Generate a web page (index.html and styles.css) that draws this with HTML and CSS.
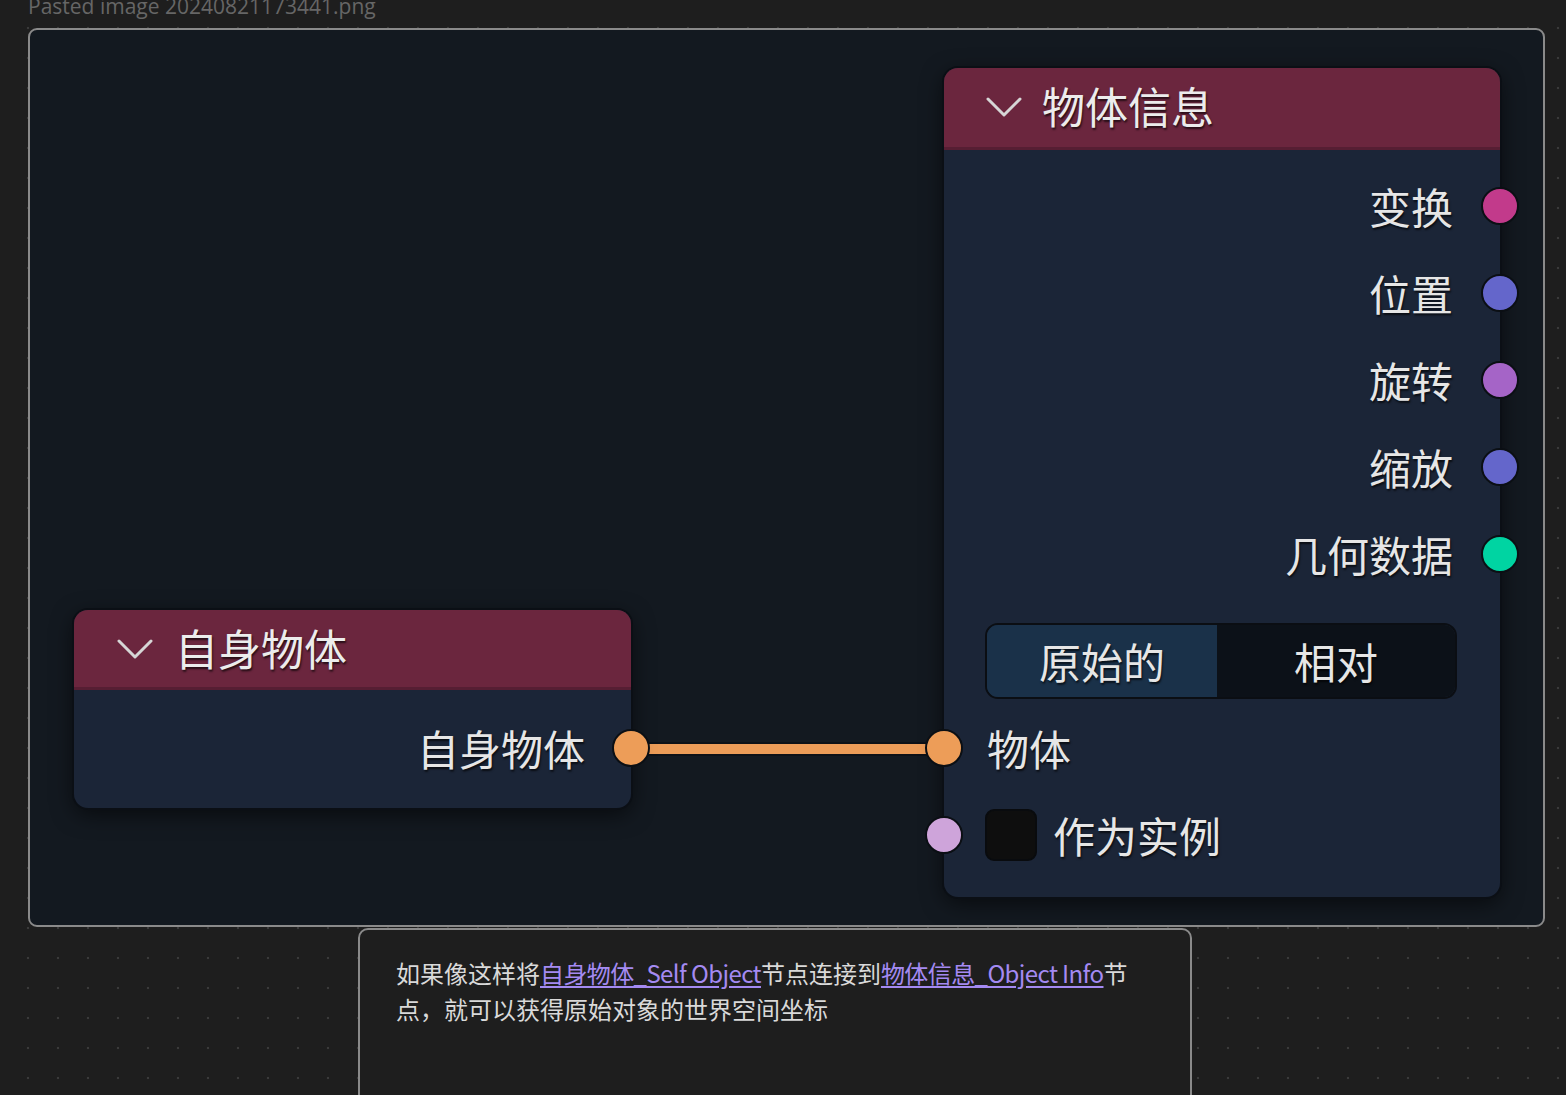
FILE: index.html
```html
<!DOCTYPE html>
<html lang="zh-CN">
<head>
<meta charset="utf-8">
<title>Pasted image</title>
<link rel="stylesheet" href="styles.css">
</head>
<body>
<div class="page">
  <div class="caption">Pasted image 20240821173441.png</div>
  <div class="frame">
    <div class="link"></div>

    <div class="node node-self">
      <div class="node-head">
        <svg class="chev" viewBox="0 0 36 20" width="36" height="20"><polyline points="2,2 18,18 34,2" fill="none" stroke="#d6d6d6" stroke-width="3" stroke-linecap="round" stroke-linejoin="round"/></svg>
        <span class="title">自身物体</span>
      </div>
      <div class="node-body self-body">
        <div class="row out"><span class="label">自身物体</span><i class="sock s-obj"></i></div>
      </div>
    </div>

    <div class="node node-info">
      <div class="node-head">
        <svg class="chev" viewBox="0 0 36 20" width="36" height="20"><polyline points="2,2 18,18 34,2" fill="none" stroke="#d6d6d6" stroke-width="3" stroke-linecap="round" stroke-linejoin="round"/></svg>
        <span class="title">物体信息</span>
      </div>
      <div class="node-body info-body">
        <div class="row out"><span class="label">变换</span><i class="sock s-matrix"></i></div>
        <div class="row out"><span class="label">位置</span><i class="sock s-vec"></i></div>
        <div class="row out"><span class="label">旋转</span><i class="sock s-rot"></i></div>
        <div class="row out"><span class="label">缩放</span><i class="sock s-vec"></i></div>
        <div class="row out"><span class="label">几何数据</span><i class="sock s-geo"></i></div>
        <div class="seg">
          <div class="seg-btn on">原始的</div>
          <div class="seg-btn">相对</div>
        </div>
        <div class="row in"><i class="sock s-obj"></i><span class="label">物体</span></div>
        <div class="row in inst"><i class="sock s-bool"></i><span class="check"></span><span class="label">作为实例</span></div>
      </div>
    </div>
  </div>
  <div class="note">
    <p>如果像这样将<a href="#">自身物体_Self Object</a>节点连接到<a href="#">物体信息_Object Info</a>节点，就可以获得原始对象的世界空间坐标</p>
  </div>
</div>
</body>
</html>
```
FILE: styles.css
```css
html, body {
  margin: 0;
  padding: 0;
}
body {
  height: 1095px;
  overflow: hidden;
  background-color: #1e1e1e;
  background-image: radial-gradient(circle at center, #3a3a3a 0, #3a3a3a 1px, transparent 1.6px);
  background-size: 30px 30px;
  background-position: 13px 13px;
  font-family: "Noto Sans CJK SC", "Noto Sans", sans-serif;
}
.page {
  padding-left: 28px;
}
.caption {
  height: 28px;
  font-family: "Open Sans", "Noto Sans", sans-serif;
  font-size: 21px;
  line-height: 12px;
  color: #666666;
  white-space: nowrap;
}
.frame {
  position: relative;
  width: 1517px;
  height: 899px;
  box-sizing: border-box;
  border: 2px solid #8a8a8a;
  border-radius: 9px;
  background: #131920;
  overflow: hidden;
}
.link {
  position: absolute;
  left: 600px;
  top: 712px;
  width: 314px;
  height: 10px;
  background: #ec9c58;
  border-top: 2px solid #0d1117;
  border-bottom: 2px solid #0d1117;
}
.node {
  position: absolute;
  background: #1b2537;
  border-radius: 14px;
  box-shadow: 0 0 0 2px #0b0f15, 0 6px 22px rgba(0, 0, 0, 0.6);
  color: #e6e6e6;
}
.node-self {
  left: 44px;
  top: 580px;
  width: 557px;
  height: 198px;
}
.node-info {
  left: 914px;
  top: 38px;
  width: 556px;
  height: 829px;
}
.node-head {
  display: flex;
  align-items: center;
  gap: 20px;
  box-sizing: border-box;
  padding-left: 42px;
  padding-bottom: 4px;
  background: #6b263e;
  border-bottom: 3px solid #561e33;
  border-radius: 14px 14px 0 0;
}
.node-self .node-head {
  height: 80px;
  padding-left: 43px;
  padding-bottom: 2px;
  gap: 22px;
}
.node-info .node-head {
  height: 82px;
}
.chev {
  display: block;
  flex: none;
  margin-top: 2px;
}
.title {
  font-size: 43px;
  line-height: 1;
  color: #ececec;
  text-shadow: 1px 2px 2px rgba(0, 0, 0, 0.65);
}
.self-body {
  padding-top: 14px;
}
.info-body {
  padding-top: 12px;
}
.row {
  position: relative;
  display: flex;
  align-items: center;
  height: 87px;
  font-size: 42px;
  line-height: 1;
}
.row.out {
  justify-content: flex-end;
  padding-right: 47px;
}
.self-body .row.out {
  padding-right: 46px;
}
.row.in {
  padding-left: 43px;
}
.row.inst {
  padding-left: 41px;
}
.label {
  color: #e6e6e6;
  text-shadow: 1px 2px 2px rgba(0, 0, 0, 0.65);
  white-space: nowrap;
}
.sock {
  position: absolute;
  top: 50%;
  width: 34px;
  height: 34px;
  margin-top: -19px;
  border: 2px solid #0b0f14;
  border-radius: 50%;
}
.row.out .sock {
  right: -19px;
}
.row.in .sock {
  left: -19px;
}
.s-matrix { background: #c23a8b; }
.s-vec { background: #6466cb; }
.s-rot { background: #a564c7; }
.s-geo { background: #00d4a2; }
.s-obj { background: #ed9d58; }
.s-bool { background: #cea4da; }
.seg {
  display: flex;
  height: 76px;
  margin: 26px 43px 5px 41px;
  box-sizing: border-box;
  border: 2px solid #0b0e13;
  border-radius: 13px;
  overflow: hidden;
  font-size: 42px;
  line-height: 1;
}
.seg-btn {
  display: flex;
  align-items: center;
  justify-content: center;
  background: #0c1118;
  color: #e6e6e6;
  text-shadow: 1px 2px 2px rgba(0, 0, 0, 0.65);
  flex: 1;
}
.seg-btn.on {
  flex: 0 0 230px;
  background: #1a3149;
}
.check {
  flex: none;
  width: 52px;
  height: 52px;
  margin-right: 16px;
  box-sizing: border-box;
  background: #0e0e0e;
  border: 2px solid #090b0e;
  border-radius: 9px;
}
.note {
  margin-left: 330px;
  margin-top: 1px;
  width: 834px;
  height: 200px;
  box-sizing: border-box;
  border: 2px solid #8a8a8a;
  border-radius: 10px;
  background: #1e1e1e;
  padding: 25px 46px 0 36px;
  font-size: 24px;
  line-height: 36px;
  color: #d9d9d9;
}
.note p {
  margin: 0;
}
.note a {
  color: #a48af2;
  text-decoration: underline;
  text-underline-offset: 3px;
  letter-spacing: -0.6px;
}
```
